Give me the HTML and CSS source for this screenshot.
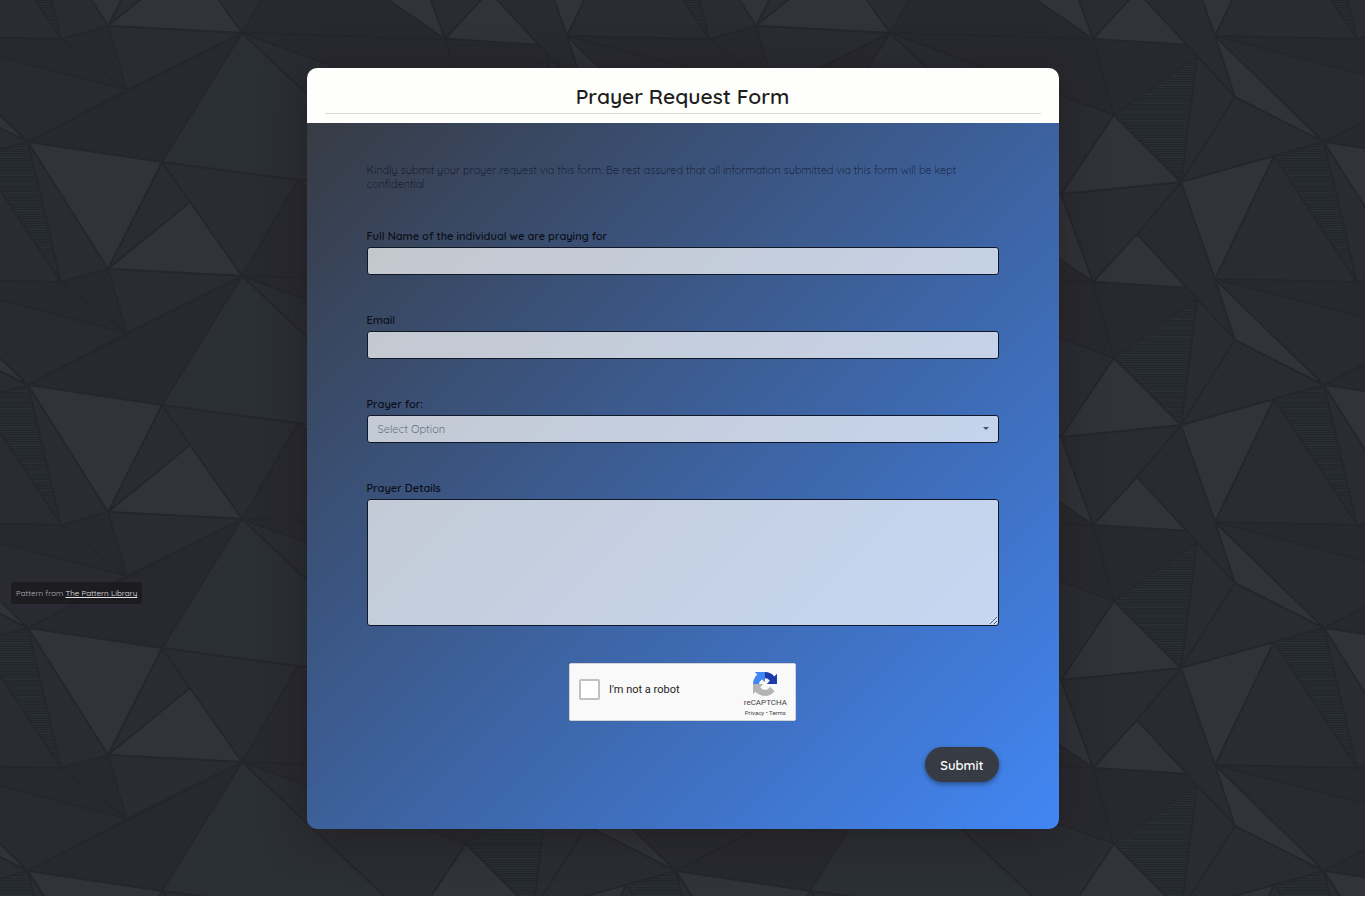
FILE: index.html
```
<!DOCTYPE html>
<html lang="en">
<head>
  <meta charset="UTF-8">
  <meta name="viewport" content="width=device-width, initial-scale=1.0">
  <title>Prayer Request Form</title>
  <link rel="stylesheet" href="styles.css">
</head>
<body>
  <div class="page">
    <svg class="pattern" aria-hidden="true">
      <defs>
        <pattern id="hatch" width="8" height="9" patternUnits="userSpaceOnUse">
          <rect width="8" height="9" fill="#292e35"/>
          <path d="M0 .5h8M0 2.5h8M0 5.5h8M0 7.5h8" stroke="#24262e"/>
        </pattern>
        <pattern id="dots" width="2" height="2" patternUnits="userSpaceOnUse">
          <rect width="2" height="2" fill="#2d3138"/>
          <path d="M0 0h1v1h-1zM1 1h1v1h-1z" fill="#2a2c33"/>
        </pattern>
        <g id="facets" stroke="#25252d" stroke-width="2" stroke-linejoin="round">
          <g fill="#282830">
            <path d="M61 39L108 26L127 90Z"/>
            <path d="M61 39L127 90L-81 36Z"/>
            <path d="M28 142L242 33L162 162Z"/>
            <path d="M242 33L466 115L445 39Z"/>
            <path d="M242 276L298 180L445 282Z"/>
            <path d="M445 39L466 115L549 56L539 45Z"/>
          </g>
          <g fill="#2a2c34">
            <path d="M-81 36L127 90L28 142Z" fill="#292a32"/>
            <path d="M108 26L242 33L127 90Z"/>
            <path d="M162 162L190 202L108 269Z"/>
            <path d="M162 162L298 180L242 276Z"/>
            <path d="M242 33L413 194L466 115Z"/>
            <path d="M549 56L533 182L587 97Z"/>
            <path d="M533 182L587 97L676 142Z"/>
            <path d="M413 194L533 182L489 234L445 282Z"/>
            <path d="M533 182L489 234L549 299L587 340L567 279Z" fill="#282b32"/>
            <path d="M626 156L567 279L709 282Z"/>
            <path d="M28 142L61 282L108 269Z"/>
          </g>
          <g fill="#31333b">
            <path d="M28 142L162 162L108 269Z"/>
            <path d="M190 202L242 276L108 269Z"/>
            <path d="M298 180L413 194L445 282Z"/>
            <path d="M466 115L413 194L533 182Z"/>
            <path d="M587 97L567 36L676 142Z"/>
            <path d="M489 234L539 288L445 282Z"/>
            <path d="M533 182L626 156L567 279Z"/>
          </g>
          <path d="M242 33L162 162L298 180L413 194Z" fill="url(#dots)"/>
          <path d="M466 115L533 182L549 56Z" fill="url(#hatch)"/>
          <path d="M626 156L676 142L709 282Z" fill="url(#hatch)"/>
        </g>
        <pattern id="triangles" width="648" height="243" patternUnits="userSpaceOnUse">
          <rect width="648" height="243" fill="#2a2c34"/>
          <use href="#facets" x="-648" y="-243"/>
          <use href="#facets" y="-243"/>
          <use href="#facets" x="648" y="-243"/>
          <use href="#facets" x="-648"/>
          <use href="#facets"/>
          <use href="#facets" x="648"/>
        </pattern>
      </defs>
      <rect width="100%" height="100%" fill="url(#triangles)"/>
    </svg>

    <main class="card">
      <header class="card-header">
        <h1>Prayer Request Form</h1>
      </header>
      <form class="card-body" method="POST" action="/prayer-request">
        <p class="intro">Kindly submit your prayer request via this form. Be rest assured that all information submitted via this form will be kept confidential</p>
        <div class="form-group">
          <label for="name">Full Name of the individual we are praying for</label>
          <input type="text" id="name" name="name">
        </div>
        <div class="form-group">
          <label for="email">Email</label>
          <input type="email" id="email" name="email">
        </div>
        <div class="form-group">
          <label for="reason">Prayer for:</label>
          <div class="select-wrap">
            <select id="reason" name="reason">
              <option value="">Select Option</option>
              <option>Healing</option>
              <option>Family</option>
              <option>Other</option>
            </select>
          </div>
        </div>
        <div class="form-group">
          <label for="details">Prayer Details</label>
          <textarea id="details" name="details"></textarea>
        </div>

        <div class="captcha">
          <input type="checkbox" id="robot" name="robot">
          <label for="robot">I'm not a robot</label>
          <div class="captcha-brand">
            <svg viewBox="0 0 64 64" aria-hidden="true">
              <path fill="#1c3aa9" d="M64 31.955l-.033-1.37V4.687l-7.16 7.16C50.948 4.674 42.033.093 32.05.093c-10.4 0-19.622 4.96-25.458 12.64l11.736 11.86a15.55 15.55 0 0 1 4.754-5.334c2.05-1.6 4.952-2.906 8.968-2.906.485 0 .86.057 1.135.163 4.976.393 9.288 3.14 11.828 7.124l-8.307 8.307L64 31.953"/>
              <path fill="#4285f4" d="M31.862.094l-1.37.033H4.594l7.16 7.16C4.58 13.147 0 22.06 0 32.046c0 10.4 4.96 19.622 12.64 25.458L24.5 45.768a15.55 15.55 0 0 1-5.334-4.754c-1.6-2.05-2.906-4.952-2.906-8.968 0-.485.057-.86.163-1.135.393-4.976 3.14-9.288 7.124-11.828l8.307 8.307L31.86.095"/>
              <path fill="#b4b4b4" d="M.001 32.045l.033 1.37v25.898l7.16-7.16c5.86 7.173 14.774 11.754 24.76 11.754 10.4 0 19.622-4.96 25.458-12.64l-11.736-11.86a15.55 15.55 0 0 1-4.754 5.334c-2.05 1.6-4.952 2.906-8.968 2.906-.485 0-.86-.057-1.135-.163-4.976-.393-9.288-3.14-11.828-7.124l8.307-8.307L0 32.045"/>
            </svg>
            <span class="captcha-name">reCAPTCHA</span>
            <span class="captcha-links"><a href="#">Privacy</a> • <a href="#">Terms</a></span>
          </div>
        </div>

        <button type="submit">Submit</button>
      </form>
    </main>

    <div class="credit">Pattern from <a href="#">The Pattern Library</a></div>
  </div>
</body>
</html>
```
FILE: styles.css
```
* {
  box-sizing: border-box;
}
body {
  margin: 0;
  background: #fff;
  font-family: Quicksand, Lato, sans-serif;
  font-size: 11px;
  line-height: 14px;
  color: #111;
}
.page {
  position: relative;
  min-height: calc(100vh - 1px);
  margin: 0 1px 1px 0;
  padding: 68px 20px 67px;
}
.pattern {
  position: absolute;
  top: 0;
  left: 0;
  width: 100%;
  height: 100%;
}
.card {
  position: relative;
  max-width: 752px;
  margin: 0 auto;
  border-radius: 10px;
  overflow: hidden;
  box-shadow: 0 5px 40px rgba(30, 28, 26, 0.7);
}
.card-header {
  padding: 12px 18px 9px;
  background: #fefefc;
}
h1 {
  margin: 0;
  padding-bottom: 1px;
  border-bottom: 1px solid #d9dbda;
  font-size: 21px;
  line-height: 32px;
  font-weight: 600;
  text-align: center;
  color: #1d1e20;
}
.card-body {
  display: flex;
  flex-direction: column;
  padding: 40px 60px 47px;
  background: linear-gradient(135deg, #373b44, #4286f4);
}
.intro {
  margin: 0 0 39px;
  font-weight: 300;
  color: rgba(4, 8, 24, 0.9);
}
.form-group {
  margin-bottom: 39px;
}
.form-group label {
  display: block;
  margin-bottom: 4px;
  line-height: 13px;
  font-weight: 600;
  color: #0b0e17;
}
.form-group input,
select,
textarea {
  display: block;
  width: 100%;
  height: 28px;
  padding: 0 10px;
  border: 1px solid #101827;
  border-radius: 3px;
  background-color: rgba(255, 255, 255, 0.7);
  font: inherit;
}
textarea {
  height: 127px;
  padding: 6px 10px;
  resize: vertical;
}
select {
  appearance: none;
  color: #697282;
}
.select-wrap {
  position: relative;
}
.select-wrap::after {
  content: "";
  position: absolute;
  top: 12px;
  right: 10px;
  border: 3px solid transparent;
  border-top-color: #43536d;
  pointer-events: none;
}
.captcha {
  display: flex;
  align-self: center;
  width: 227px;
  height: 58px;
  margin: -2px 0 26px;
  padding: 0 8px 0 9px;
  border: 1px solid #d3d3d3;
  border-radius: 2px;
  background: #f9f9f9;
  font-family: Roboto, sans-serif;
  color: #222;
}
.captcha input {
  appearance: none;
  width: 21px;
  height: 21px;
  margin: 15px 9px 0 0;
  border: 2px solid #c1c1c1;
  border-radius: 2px;
  background: #fff;
}
.captcha label {
  margin-top: 19px;
}
.captcha-brand {
  display: flex;
  flex-direction: column;
  align-items: center;
  margin-left: auto;
  padding-top: 8px;
  color: #444;
}
.captcha-brand svg {
  width: 24px;
  height: 24px;
  margin-bottom: 2px;
}
.captcha-name {
  font-size: 8px;
  line-height: 10px;
}
.captcha-links {
  font-size: 6px;
  line-height: 9px;
}
.captcha-links a {
  color: #444;
  text-decoration: none;
}
button {
  align-self: flex-end;
  height: 35px;
  padding: 0 15px;
  border: none;
  border-radius: 18px;
  background-color: #373b44;
  color: #fff;
  font: 600 13px/20px Quicksand, Lato, sans-serif;
  box-shadow: 0 2px 5px rgba(0, 0, 0, 0.4);
  cursor: pointer;
}
button:hover {
  background-color: #4a4f5b;
}
.credit {
  position: absolute;
  top: 65%;
  left: 11px;
  padding: 4px 5px;
  border-radius: 3px;
  background: rgba(20, 20, 22, 0.6);
  font-size: 8px;
  color: #b5b5b8;
}
.credit a {
  color: #e0e0e3;
}
```
